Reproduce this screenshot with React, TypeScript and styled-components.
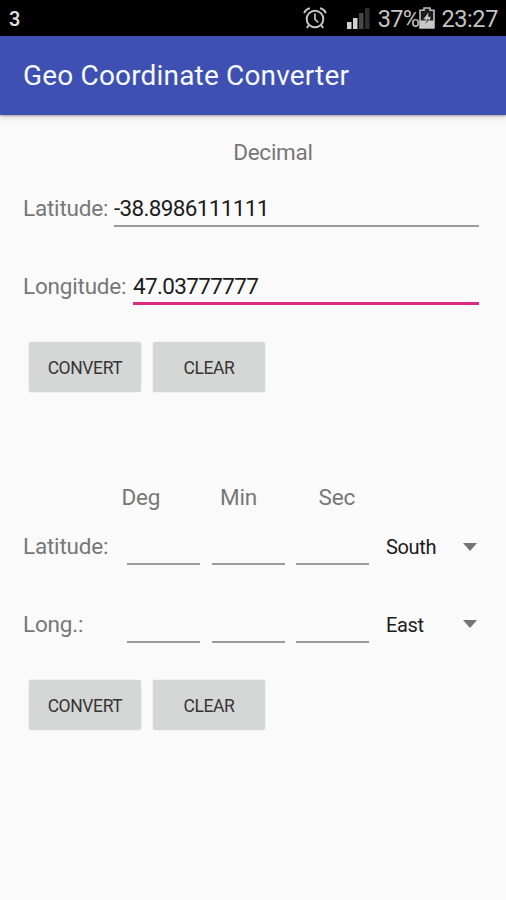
import React, { useState } from "react";
import styled, { createGlobalStyle } from "styled-components";

const GlobalStyle = createGlobalStyle`
  *, *::before, *::after { box-sizing: border-box; }
  body {
    margin: 0;
    background: #fafafa;
    font-family: Roboto, "Liberation Sans", sans-serif;
  }
`;

const Screen = styled.div`
  width: 506px;
  height: 900px;
  display: flex;
  flex-direction: column;
  background: #fafafa;
  overflow: hidden;
`;

const StatusBar = styled.header`
  flex: none;
  height: 36px;
  padding: 0 8px 0 9px;
  display: flex;
  align-items: center;
  justify-content: space-between;
  background: #000;
  color: #c4c4c4;
`;

const Carrier = styled.span`
  font-size: 20px;
  font-weight: 500;
  line-height: 36px;
  padding-top: 2px;
  color: #e2e2e2;
`;

const StatusIcons = styled.div`
  display: flex;
  align-items: center;
  height: 36px;
`;

const StatusText = styled.span<{ $tracking: number }>`
  font-size: 23.5px;
  line-height: 36px;
  padding-top: 1px;
  letter-spacing: ${(p) => p.$tracking}px;
`;

const AlarmSvg = styled.svg`
  margin-right: 20px;
`;

const SignalSvg = styled.svg`
  margin-right: 8px;
`;

const BatterySvg = styled.svg`
  margin-right: 6px;
`;

const AppBar = styled.div`
  flex: none;
  position: relative;
  height: 79px;
  padding: 1px 23px 0;
  display: flex;
  align-items: center;
  background: #3e50b2;
  box-shadow: 0 1px 2px rgba(70, 45, 30, 0.4), 0 3px 7px rgba(70, 45, 30, 0.12);
`;

const Title = styled.h1`
  margin: 0;
  font-size: 28px;
  font-weight: 400;
  line-height: 40px;
  letter-spacing: 0.17px;
  color: #f6f8ff;
`;

const Content = styled.main`
  flex: 1;
  padding: 21px 27px 0 23px;
  display: flex;
  flex-direction: column;
`;

const Heading = styled.h2`
  margin: 0 0 28px;
  padding-left: 44px;
  text-align: center;
  font-size: 22.5px;
  font-weight: 400;
  line-height: 32px;
  letter-spacing: -0.25px;
  color: #777;
`;

const Row = styled.div<{ $last?: boolean }>`
  display: flex;
  align-items: flex-start;
  height: ${(p) => (p.$last ? 68.5 : 77.5)}px;
`;

const Label = styled.label<{ $width: number }>`
  flex: none;
  width: ${(p) => p.$width}px;
  font-size: 22.5px;
  line-height: 25px;
  letter-spacing: -0.2px;
  color: #777;
  white-space: nowrap;
`;

const Field = styled.input<{ $focused?: boolean }>`
  flex: 1;
  min-width: 0;
  height: ${(p) => (p.$focused ? 31.5 : 31)}px;
  padding: 0 0 ${(p) => (p.$focused ? 4 : 5)}px;
  border: 0;
  border-bottom: ${(p) => (p.$focused ? "3px solid #d92c7e" : "2px solid #9c9c9c")};
  border-radius: 0;
  outline: none;
  background: transparent;
  font-family: inherit;
  font-size: 22.5px;
  line-height: 24px;
  letter-spacing: -0.65px;
  color: #1c1c1c;
`;

const Actions = styled.div`
  display: flex;
  gap: 12px;
  padding-left: 6px;
`;

const Button = styled.button`
  width: 112px;
  height: 50px;
  padding: 1px 0 0;
  border: 0;
  border-radius: 2px;
  background: #d5d7d6;
  box-shadow: 0 0 2px rgba(0, 0, 0, 0.12);
  font-family: inherit;
  font-size: 17.5px;
  line-height: 24px;
  letter-spacing: -0.4px;
  color: #353535;
`;

const UnitHeader = styled.div`
  display: grid;
  grid-template-columns: 98.5px 98.5px 1fr;
  margin: 89px 0 21px;
  padding-left: 98.5px;
  font-size: 22.5px;
  line-height: 32px;
  letter-spacing: -0.2px;
  color: #777;
`;

const Parts = styled.div`
  display: grid;
  grid-template-columns: repeat(3, 73px);
  gap: 11.5px;
`;

const Spinner = styled.button`
  flex: 1;
  margin-left: 17px;
  padding: 1px 2px 0 0;
  border: 0;
  display: flex;
  align-items: center;
  justify-content: space-between;
  background: transparent;
  font-family: inherit;
  font-size: 20px;
  line-height: 25px;
  letter-spacing: -0.35px;
  color: #1c1c1c;
`;

const ArrowSvg = styled.svg`
  margin-bottom: 2px;
`;

const AlarmIcon = () => (
  <AlarmSvg width="24" height="22" viewBox="0 0 24 22" fill="none" stroke="#c4c4c4">
    <circle cx="12" cy="12" r="8.3" strokeWidth="2" />
    <path d="M12 6.5v5.8l3.3 3.2" strokeWidth="1.7" />
    <path d="M1.2 6.2C2 3.6 4.2 1.7 7 1.2M22.8 6.2C22 3.6 19.8 1.7 17 1.2" strokeWidth="2" />
    <path d="M6 18l-2.2 2.8M18 18l2.2 2.8" strokeWidth="2" />
  </AlarmSvg>
);

const SignalIcon = () => (
  <SignalSvg width="23" height="21" viewBox="0 0 23 21">
    <rect x="0" y="14" width="4.5" height="7" fill="#d0d0d0" />
    <rect x="6" y="10" width="4.5" height="11" fill="#d0d0d0" />
    <rect x="12" y="5" width="4.5" height="16" fill="#484848" />
    <rect x="18" y="0" width="4.5" height="21" fill="#303030" />
  </SignalSvg>
);

const BatteryIcon = () => (
  <BatterySvg width="16" height="22" viewBox="0 0 16 22">
    <path d="M1 3.2h4V1h6v2.2h4V21H1z" fill="#1c1c1c" stroke="#bdbdbd" strokeWidth="1.6" />
    <rect x="1" y="13.5" width="14" height="7.5" fill="#c8c8c8" />
    <path d="M9.5 5.5L4.3 12.2h3L6 13.5h4.5l1.2-3.7H9z" fill="#c8c8c8" />
    <path d="M8.6 12.2L5.8 17.6l4.6-5.4z" fill="#333" />
  </BatterySvg>
);

const Arrow = () => (
  <ArrowSvg width="14" height="8" viewBox="0 0 14 8">
    <path d="M0 0h14L7 8z" fill="#747474" />
  </ArrowSvg>
);

function AngleRow({ label, direction, last }: { label: string; direction: string; last?: boolean }) {
  return (
    <Row $last={last}>
      <Label $width={104}>{label}</Label>
      <Parts>
        <Field aria-label={`${label} degrees`} />
        <Field aria-label={`${label} minutes`} />
        <Field aria-label={`${label} seconds`} />
      </Parts>
      <Spinner>
        {direction}
        <Arrow />
      </Spinner>
    </Row>
  );
}

export default function App() {
  const [latitude, setLatitude] = useState("-38.8986111111");
  const [longitude, setLongitude] = useState("47.03777777");

  const clear = () => {
    setLatitude("");
    setLongitude("");
  };

  return (
    <>
      <GlobalStyle />
      <Screen>
        <StatusBar>
          <Carrier>3</Carrier>
          <StatusIcons>
            <AlarmIcon />
            <SignalIcon />
            <StatusText $tracking={-0.6}>37%</StatusText>
            <BatteryIcon />
            <StatusText $tracking={-0.4}>23:27</StatusText>
          </StatusIcons>
        </StatusBar>
        <AppBar>
          <Title>Geo Coordinate Converter</Title>
        </AppBar>
        <Content>
          <Heading>Decimal</Heading>
          <Row>
            <Label $width={91}>Latitude:</Label>
            <Field value={latitude} onChange={(e) => setLatitude(e.target.value)} />
          </Row>
          <Row $last>
            <Label $width={110}>Longitude:</Label>
            <Field $focused value={longitude} onChange={(e) => setLongitude(e.target.value)} />
          </Row>
          <Actions>
            <Button>CONVERT</Button>
            <Button onClick={clear}>CLEAR</Button>
          </Actions>
          <UnitHeader>
            <span>Deg</span>
            <span>Min</span>
            <span>Sec</span>
          </UnitHeader>
          <AngleRow label="Latitude:" direction="South" />
          <AngleRow label="Long.:" direction="East" last />
          <Actions>
            <Button>CONVERT</Button>
            <Button>CLEAR</Button>
          </Actions>
        </Content>
      </Screen>
    </>
  );
}
